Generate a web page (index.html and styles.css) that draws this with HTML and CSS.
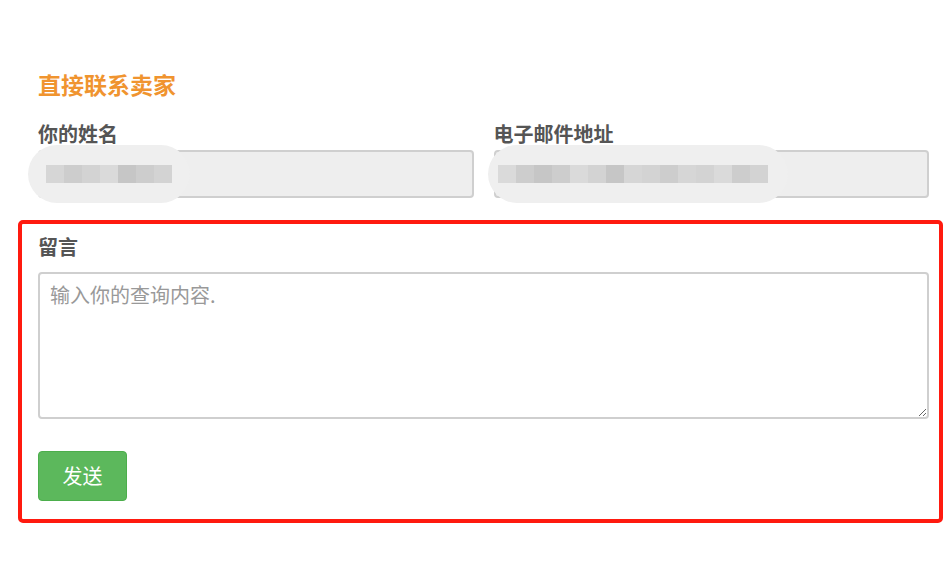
FILE: index.html
```html
<!DOCTYPE html>
<html lang="zh-CN">
<head>
<meta charset="utf-8">
<title>直接联系卖家</title>
<link rel="stylesheet" href="styles.css">
</head>
<body>
<div class="page">
  <h2 class="title">直接联系卖家</h2>
  <div class="row">
    <div class="field">
      <label class="label">你的姓名</label>
      <div class="input-wrap">
        <input class="input" type="text" readonly>
        <div class="blur blur-name">
          <span class="px p1"></span><span class="px p2"></span><span class="px p3"></span><span class="px p4"></span><span class="px p5"></span><span class="px p2"></span><span class="px p3"></span>
        </div>
      </div>
    </div>
    <div class="field">
      <label class="label">电子邮件地址</label>
      <div class="input-wrap">
        <input class="input" type="text" readonly>
        <div class="blur blur-email">
          <span class="px p4"></span><span class="px p2"></span><span class="px p5"></span><span class="px p2"></span><span class="px p4"></span><span class="px p3"></span><span class="px p5"></span><span class="px p1"></span><span class="px p3"></span><span class="px p2"></span><span class="px p1"></span><span class="px p3"></span><span class="px p4"></span><span class="px p2"></span><span class="px p3"></span>
        </div>
      </div>
    </div>
  </div>
  <div class="highlight">
    <label class="label">留言</label>
    <textarea class="textarea" placeholder="输入你的查询内容."></textarea>
    <button class="btn" type="button">发送</button>
  </div>
</div>
</body>
</html>
```

FILE: styles.css
```css
html, body {
  margin: 0;
  padding: 0;
  background: #fff;
}
body {
  font-family: "Noto Sans CJK SC", "Noto Sans", sans-serif;
  color: #555;
}
.page {
  padding-top: 70px;
}
.title {
  margin: 0 0 24px 38px;
  font-size: 23px;
  line-height: 28px;
  font-weight: 700;
  color: #f0942f;
}
.row {
  display: grid;
  grid-template-columns: 1fr 1fr;
  column-gap: 20px;
  padding: 0 22px 0 38px;
}
.field {
  display: flex;
  flex-direction: column;
}
.label {
  display: block;
  font-size: 20px;
  line-height: 24px;
  font-weight: 700;
  color: #555;
}
.input-wrap {
  position: relative;
  margin-top: 4px;
}
.input {
  display: block;
  box-sizing: border-box;
  width: 100%;
  height: 48px;
  margin: 0;
  background: #eee;
  border: 2px solid #cfcfcf;
  border-radius: 4px;
  outline: none;
}
.blur {
  position: absolute;
  top: -5px;
  height: 58px;
  background: #efefef;
  border-radius: 29px;
  display: flex;
  align-items: center;
  box-sizing: border-box;
}
.blur-name {
  left: -10px;
  width: 162px;
  padding-left: 18px;
}
.blur-email {
  left: -6px;
  width: 300px;
  padding-left: 10px;
}
.px {
  display: block;
  width: 18px;
  height: 18px;
}
.p1 { background: #d6d6d6; }
.p2 { background: #cdcdcd; }
.p3 { background: #d3d3d3; }
.p4 { background: #dadada; }
.p5 { background: #c6c6c6; }
.highlight {
  box-sizing: border-box;
  width: 925px;
  margin: 22px 0 0 18px;
  padding: 11px 10px 18px 16px;
  border: 4px solid #ff1a0f;
  border-radius: 5px;
  display: flex;
  flex-direction: column;
  align-items: flex-start;
}
.textarea {
  display: block;
  box-sizing: border-box;
  width: 100%;
  height: 147px;
  margin: 13px 0 0 0;
  padding: 7px 10px;
  border: 2px solid #cfcfcf;
  border-radius: 4px;
  font-family: "Noto Sans CJK SC", "Noto Sans", sans-serif;
  font-size: 20px;
  line-height: 28px;
  color: #555;
  background: #fff;
  outline: none;
}
.textarea::placeholder {
  color: #999;
}
.btn {
  margin-top: 32px;
  width: 89px;
  height: 50px;
  padding: 0;
  background: #5cb85c;
  border: 1px solid #4cae4c;
  border-radius: 4px;
  color: #fff;
  font-family: "Noto Sans CJK SC", "Noto Sans", sans-serif;
  font-size: 20px;
  line-height: 26px;
  cursor: pointer;
}
```
